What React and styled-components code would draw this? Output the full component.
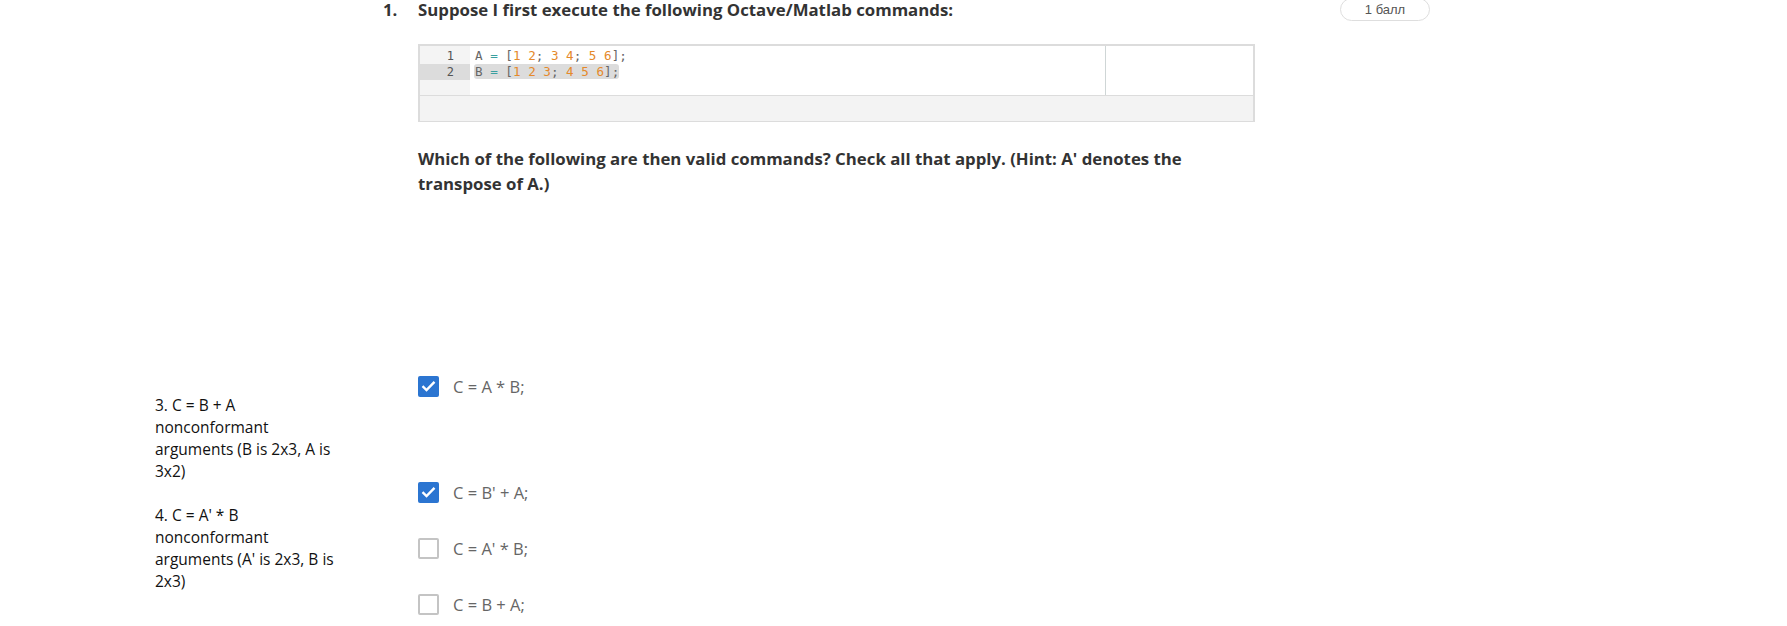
import React from "react";
import styled, { createGlobalStyle } from "styled-components";

const Global = createGlobalStyle`
  html, body { margin: 0; padding: 0; background: #fff; }
  body { font-family: "Open Sans", Arial, sans-serif; color: #333; }
`;

const Page = styled.div`
  display: flex;
  align-items: flex-start;
  width: 1787px;
  height: 626px;
  overflow: hidden;
`;

const Aside = styled.aside`
  width: 383px;
  flex: none;
  box-sizing: border-box;
  padding: 394px 0 0 155px;
`;

const Note = styled.div`
  width: 188px;
  font-family: "Open Sans", sans-serif;
  font-size: 15.5px;
  line-height: 22px;
  color: #111;
`;

const NoteBlock = styled.p`
  margin: 0 0 22px;
`;

const Main = styled.main`
  width: 957px;
  flex: none;
`;

const Heading = styled.div`
  display: flex;
  font-size: 16.8px;
  font-weight: 700;
  line-height: 20px;
  color: #333;
`;

const Num = styled.span`
  width: 35px;
  flex: none;
`;

const Body = styled.div`
  margin-left: 35px;
  width: 837px;
`;

const Editor = styled.div`
  margin-top: 24px;
  border: 2px solid #dcdcdc;
  border-bottom-width: 1px;
  background: #fff;
`;

const EditorTop = styled.div`
  display: grid;
  grid-template-columns: 1fr 148px;
  height: 49px;
`;

const CodeArea = styled.div`
  display: grid;
  grid-template-columns: 50px 1fr;
  grid-auto-rows: 16px;
  padding-top: 2px;
  align-content: start;
  background: linear-gradient(to right, #f4f4f4 50px, #fff 50px);
`;

const Gutter = styled.div`
  font-family: "DejaVu Sans Mono", "Liberation Mono", monospace;
  font-size: 12px;
  line-height: 16px;
  color: #555;
  text-align: right;
  padding-right: 16px;
  background: ${(p) => (p.$active ? "#dcdcdc" : "transparent")};
`;

const Line = styled.div`
  font-family: "DejaVu Sans Mono", "Liberation Mono", monospace;
  font-size: 12.6px;
  line-height: 16px;
  color: #666;
  padding-left: 5px;
  white-space: pre;
`;

const Sel = styled.span`
  background: #dcdcdc;
  border-radius: 3px;
  padding: 0 0 0 1px;
  margin-left: -1px;
`;

const Op = styled.span`
  color: #3aa0a0;
`;
const N = styled.span`
  color: #e5892a;
`;

const SidePanel = styled.div`
  border-left: 1px solid #cfd6d6;
`;

const EditorBar = styled.div`
  height: 25px;
  background: #f3f3f3;
  border-top: 1px solid #dcdcdc;
`;

const Question = styled.div`
  margin-top: 24px;
  font-size: 16.8px;
  font-weight: 700;
  line-height: 25px;
  color: #333;
`;

const Options = styled.div`
  margin-top: 179px;
  display: flex;
  flex-direction: column;
`;

const Option = styled.label`
  display: flex;
  align-items: center;
  gap: 14px;
  height: 22px;
  margin-bottom: ${(p) => (p.$gap ? 84 : 34)}px;
  font-size: 16.5px;
  color: #666;
`;

const Box = styled.span`
  width: 21px;
  height: 21px;
  box-sizing: border-box;
  border-radius: 2px;
  flex: none;
  display: flex;
  align-items: center;
  justify-content: center;
  background: ${(p) => (p.$checked ? "#2b75d1" : "#fff")};
  border: ${(p) => (p.$checked ? "none" : "2px solid #c4c4c4")};
`;

const Pill = styled.div`
  margin-top: -2px;
  width: 90px;
  height: 23px;
  box-sizing: border-box;
  border: 1px solid #dedede;
  border-radius: 12px;
  display: flex;
  align-items: center;
  justify-content: center;
  font-family: "Liberation Sans", Arial, sans-serif;
  font-size: 13px;
  color: #555;
`;

const Check = () => (
  <svg width="15" height="12" viewBox="0 0 15 12">
    <path d="M1.5 6.2 L5.5 10 L13.5 1.8" fill="none" stroke="#fff" strokeWidth="2.4" />
  </svg>
);

const CheckOption = ({ checked, gap, children }) => (
  <Option $gap={gap}>
    <Box $checked={checked}>{checked && <Check />}</Box>
    {children}
  </Option>
);

export default function App() {
  return (
    <>
      <Global />
      <Page>
        <Aside>
          <Note>
            <NoteBlock>
              3. C = B + A<br />
              nonconformant arguments (B is 2x3, A is 3x2)
            </NoteBlock>
            <NoteBlock>
              4. C = A' * B<br />
              nonconformant arguments (A' is 2x3, B is 2x3)
            </NoteBlock>
          </Note>
        </Aside>
        <Main>
          <Heading>
            <Num>1.</Num>
            <span>Suppose I first execute the following Octave/Matlab commands:</span>
          </Heading>
          <Body>
            <Editor>
              <EditorTop>
                <CodeArea>
                  <Gutter>1</Gutter>
                  <Line>
                    A <Op>=</Op> [<N>1</N> <N>2</N>; <N>3</N> <N>4</N>; <N>5</N> <N>6</N>];
                  </Line>
                  <Gutter $active>2</Gutter>
                  <Line>
                    <Sel>
                      B <Op>=</Op> [<N>1</N> <N>2</N> <N>3</N>; <N>4</N> <N>5</N> <N>6</N>];
                    </Sel>
                  </Line>
                </CodeArea>
                <SidePanel />
              </EditorTop>
              <EditorBar />
            </Editor>
            <Question>
              Which of the following are then valid commands? Check all that apply. (Hint: A' denotes the
              transpose of A.)
            </Question>
            <Options>
              <CheckOption checked gap>C = A * B;</CheckOption>
              <CheckOption checked>C = B' + A;</CheckOption>
              <CheckOption>C = A' * B;</CheckOption>
              <CheckOption>C = B + A;</CheckOption>
            </Options>
          </Body>
        </Main>
        <Pill>1 балл</Pill>
      </Page>
    </>
  );
}
